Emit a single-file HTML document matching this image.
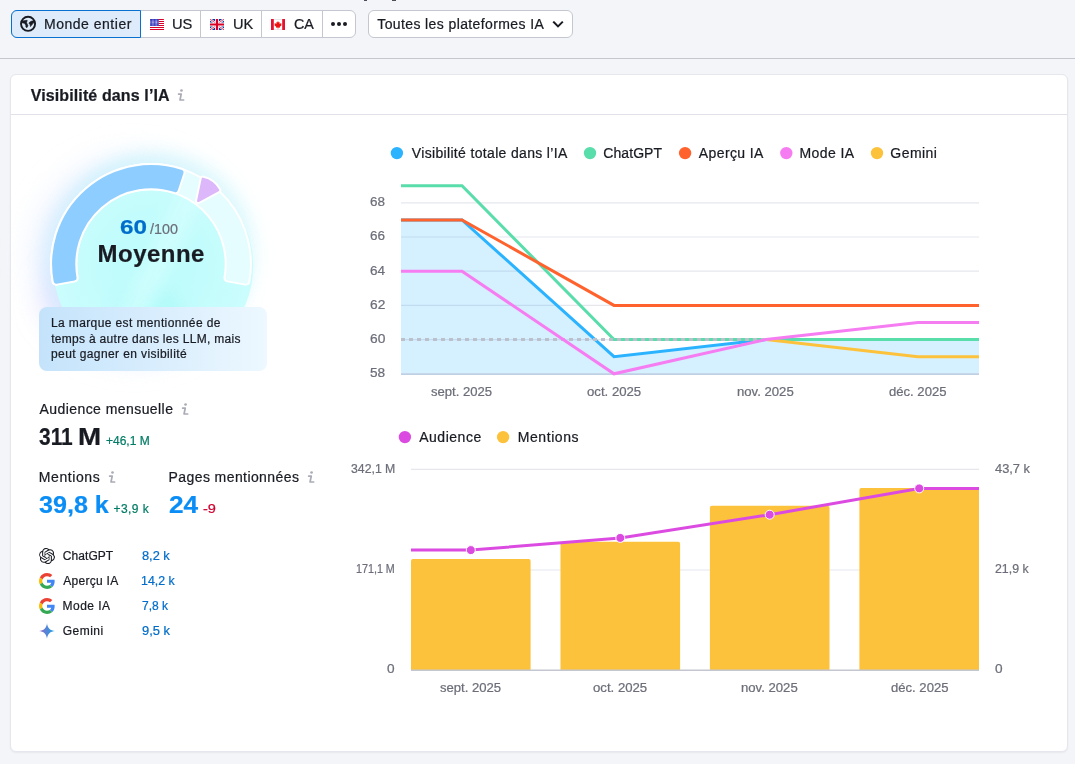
<!DOCTYPE html>
<html lang="fr">
<head>
<meta charset="utf-8">
<title>Visibilité dans l’IA</title>
<style>
*{box-sizing:border-box;margin:0;padding:0}
html,body{width:1075px;height:764px;overflow:hidden;background:#f4f5f9;font-family:"Liberation Sans",sans-serif;color:#191b23}
body{position:relative}
.t{position:absolute;white-space:nowrap;line-height:40px;transform-origin:0 0;-webkit-text-stroke:0.22px currentColor}
.abs{position:absolute}
.hr{position:absolute;left:0;top:58px;width:1075px;height:1px;background:#c4c7cf}
.card{position:absolute;left:10px;top:74px;width:1058px;height:678px;background:#fff;border:1px solid #e6e7ee;border-radius:6px;box-shadow:0 1px 2px rgba(25,27,35,.06)}
.cardhr{position:absolute;left:11px;top:114px;width:1056px;height:1px;background:#e0e1e9}
.btn{position:absolute;top:10px;height:28px;background:#fff;border:1px solid #c4c7cf}
.desc{position:absolute;left:39px;top:307px;width:228px;height:64px;border-radius:8px;background:linear-gradient(90deg,#c4e3fb 0%,#d8edfd 50%,#edf8ff 100%)}
svg{position:absolute;left:0;top:0;overflow:visible}
</style>
</head>
<body>
<div class="hr"></div>
<div class="abs" style="left:364px;top:0;width:3.4px;height:1px;background:#4b4d59"></div>
<div class="abs" style="left:392.2px;top:0;width:3.4px;height:1px;background:#4b4d59"></div>
<!-- top pills -->
<div class="btn" style="left:11px;width:345px;border-radius:6px"></div>
<div class="abs" style="left:200px;top:11px;width:1px;height:26px;background:#c4c7cf"></div>
<div class="abs" style="left:261px;top:11px;width:1px;height:26px;background:#c4c7cf"></div>
<div class="abs" style="left:322px;top:11px;width:1px;height:26px;background:#c4c7cf"></div>
<div class="btn" style="left:11px;width:130px;border-radius:6px 0 0 6px;background:#ddebfa;border-color:#0871d0"></div>
<div class="btn" style="left:368px;width:205px;border-radius:6px"></div>

<div class="card"></div>
<div class="cardhr"></div>

<!-- gauge -->
<svg id="gauge" width="1075" height="764" viewBox="0 0 1075 764">
<defs>
<filter id="blur1" x="-50%" y="-50%" width="200%" height="200%"><feGaussianBlur stdDeviation="17"/></filter>
<filter id="blur2" x="-50%" y="-50%" width="200%" height="200%"><feGaussianBlur stdDeviation="8"/></filter>
<filter id="blur3" x="-100%" y="-100%" width="300%" height="300%"><feGaussianBlur stdDeviation="14"/></filter>
<radialGradient id="cy" cx="0.5" cy="0.5" r="0.5"><stop offset="0" stop-color="#bbfcfb"/><stop offset="0.6" stop-color="#c4fcfc"/><stop offset="1" stop-color="#cbfdfd"/></radialGradient>
</defs>
<circle cx="134" cy="258" r="98" fill="#dce8ff" filter="url(#blur1)" opacity="0.62"/>
<circle cx="76" cy="300" r="34" fill="#e4dcff" filter="url(#blur3)" opacity="0.55"/>
<circle cx="142" cy="262" r="101" fill="#cfe7fe" filter="url(#blur2)" opacity="0.55"/>
<circle cx="155" cy="252" r="101" fill="#c9f7fb" filter="url(#blur2)" opacity="0.5"/>
<circle cx="153.2" cy="266" r="100" fill="url(#cy)"/>
<clipPath id="cclip"><circle cx="153.2" cy="266" r="100"/></clipPath>
<g clip-path="url(#cclip)"><ellipse cx="150" cy="318" rx="34" ry="30" fill="#aefaf9" filter="url(#blur2)" opacity="0.8"/><path d="M190 170L215 175L140 330L110 330Z" fill="#d6fefe" filter="url(#blur2)" opacity="0.7"/></g>
<path d="M56.14 281.17A96.40 96.40 0 1 1 245.86 281.17L227.95 277.93A78.20 78.20 0 1 0 74.05 277.93Z" fill="#fff" stroke="#fff" stroke-width="9.0" stroke-linejoin="round"/>
<path d="M56.14 281.17A96.40 96.40 0 1 1 245.86 281.17L227.95 277.93A78.20 78.20 0 1 0 74.05 277.93Z" fill="#e5fdfe" stroke="#e5fdfe" stroke-width="5.0" stroke-linejoin="round"/>
<path d="M56.14 281.17A96.40 96.40 0 0 1 181.04 172.40L175.37 189.69A78.20 78.20 0 0 0 74.05 277.93Z" fill="#fff" stroke="#fff" stroke-width="9.0" stroke-linejoin="round"/>
<path d="M56.14 281.17A96.40 96.40 0 0 1 181.04 172.40L175.37 189.69A78.20 78.20 0 0 0 74.05 277.93Z" fill="#8ecdff" stroke="#8ecdff" stroke-width="5.0" stroke-linejoin="round"/>
<path d="M198.26 200.82L202.86 178.80A22.50 22.50 0 0 1 218.09 190.19Z" fill="#fff" stroke="#fff" stroke-width="6.4" stroke-linejoin="round"/>
<path d="M198.26 200.82L202.86 178.80A22.50 22.50 0 0 1 218.09 190.19Z" fill="#dcb8fb" stroke="#dcb8fb" stroke-width="2.4" stroke-linejoin="round"/>
</svg>
<div class="desc"></div>

<!-- charts -->
<svg id="charts" width="1075" height="764" viewBox="0 0 1075 764">
<line x1="401" x2="979" y1="202.8" y2="202.8" stroke="#e6e7ed" stroke-width="1.2"/>
<line x1="401" x2="979" y1="237.0" y2="237.0" stroke="#e6e7ed" stroke-width="1.2"/>
<line x1="401" x2="979" y1="271.2" y2="271.2" stroke="#e6e7ed" stroke-width="1.2"/>
<line x1="401" x2="979" y1="305.4" y2="305.4" stroke="#e6e7ed" stroke-width="1.2"/>
<line x1="401" x2="979" y1="339.6" y2="339.6" stroke="#e6e7ed" stroke-width="1.2"/>
<polygon points="401.0,219.9 462.0,219.9 614.0,356.7 766.0,339.6 918.0,339.6 979.0,339.6 979.0,373.8 401.0,373.8" fill="#2bb3ff" fill-opacity="0.2"/>
<line x1="401" x2="979" y1="374.1" y2="374.1" stroke="#bfcfe4" stroke-width="1.6"/>
<polyline points="401.0,219.9 462.0,219.9 614.0,356.7 766.0,339.6 918.0,339.6 979.0,339.6" fill="none" stroke="#2bb3ff" stroke-width="3" stroke-linejoin="miter"/>
<polyline points="401.0,185.7 462.0,185.7 614.0,339.6 766.0,339.6 918.0,339.6 979.0,339.6" fill="none" stroke="#59ddaa" stroke-width="3" stroke-linejoin="miter"/>
<line x1="401" x2="766" y1="339.6" y2="339.6" stroke="#bcbfcc" stroke-width="3" stroke-dasharray="4 4"/>
<polyline points="401.0,219.9 462.0,219.9 614.0,305.4 766.0,305.4 918.0,305.4 979.0,305.4" fill="none" stroke="#ff622d" stroke-width="3" stroke-linejoin="miter"/>
<polyline points="766.0,339.6 918.0,356.7 979.0,356.7" fill="none" stroke="#fdc23c" stroke-width="3" stroke-linejoin="miter"/>
<polyline points="401.0,271.2 462.0,271.2 614.0,373.8 766.0,339.6 918.0,322.5 979.0,322.5" fill="none" stroke="#f67cf2" stroke-width="3" stroke-linejoin="miter"/>
<circle cx="396.9" cy="153.1" r="6.2" fill="#2bb3ff"/>
<circle cx="590" cy="153.1" r="6.2" fill="#59ddaa"/>
<circle cx="685.1" cy="153.1" r="6.2" fill="#ff622d"/>
<circle cx="786.3" cy="153.1" r="6.2" fill="#f67cf2"/>
<circle cx="877" cy="153.1" r="6.2" fill="#fdc23c"/>
<line x1="411" x2="979" y1="469.4" y2="469.4" stroke="#e6e7ed" stroke-width="1.2"/>
<line x1="411" x2="979" y1="570.0" y2="570.0" stroke="#e6e7ed" stroke-width="1.2"/>
<path d="M411.0 670.3V561.0a2 2 0 0 1 2 -2H528.6a2 2 0 0 1 2 2V670.3Z" fill="#fdc23c"/>
<path d="M560.5 670.3V543.7a2 2 0 0 1 2 -2H678.1a2 2 0 0 1 2 2V670.3Z" fill="#fdc23c"/>
<path d="M709.9 670.3V507.7a2 2 0 0 1 2 -2H827.5a2 2 0 0 1 2 2V670.3Z" fill="#fdc23c"/>
<path d="M859.4 670.3V490.1a2 2 0 0 1 2 -2H977.0a2 2 0 0 1 2 2V670.3Z" fill="#fdc23c"/>
<line x1="411" x2="979" y1="670.3" y2="670.3" stroke="#c4c7cf" stroke-width="1.6"/>
<path d="M411.0 550.1L470.8 550.1L620.3 537.9L769.7 514.7L919.2 488.4L979.0 488.4" fill="none" stroke="#dc4be1" stroke-width="3" stroke-linejoin="round"/>
<circle cx="470.8" cy="550.1" r="4.5" fill="#dc4be1" stroke="#fff" stroke-width="1"/>
<circle cx="620.3" cy="537.9" r="4.5" fill="#dc4be1" stroke="#fff" stroke-width="1"/>
<circle cx="769.7" cy="514.7" r="4.5" fill="#dc4be1" stroke="#fff" stroke-width="1"/>
<circle cx="919.2" cy="488.4" r="4.5" fill="#dc4be1" stroke="#fff" stroke-width="1"/>
<circle cx="404.9" cy="437.1" r="6.2" fill="#dc4be1"/>
<circle cx="503.1" cy="437.1" r="6.2" fill="#fdc23c"/>
</svg>

<!-- icons -->
<svg id="icons" width="1075" height="764" viewBox="0 0 1075 764">
<defs><linearGradient id="gem" x1="0" y1="0.5" x2="1" y2="0.5"><stop offset="0" stop-color="#9b62c4"/><stop offset="0.45" stop-color="#5684d6"/><stop offset="1" stop-color="#1aa4e5"/></linearGradient><clipPath id="fl1"><rect x="150" y="19" width="14" height="11" rx="0.5"/></clipPath><clipPath id="fl2"><rect x="210" y="19" width="14" height="11" rx="0.5"/></clipPath></defs>
<circle cx="181.50" cy="90.50" r="1.35" fill="#a9abb6"/><path d="M178.60 94.10H181.20L180.00 100.00H183.60" fill="none" stroke="#a9abb6" stroke-width="1.7" stroke-linecap="round" stroke-linejoin="round"/>
<circle cx="185.55" cy="404.50" r="1.35" fill="#a9abb6"/><path d="M182.65 408.10H185.25L184.05 414.00H187.65" fill="none" stroke="#a9abb6" stroke-width="1.7" stroke-linecap="round" stroke-linejoin="round"/>
<circle cx="112.50" cy="472.50" r="1.35" fill="#a9abb6"/><path d="M109.60 476.10H112.20L111.00 482.00H114.60" fill="none" stroke="#a9abb6" stroke-width="1.7" stroke-linecap="round" stroke-linejoin="round"/>
<circle cx="311.55" cy="472.50" r="1.35" fill="#a9abb6"/><path d="M308.65 476.10H311.25L310.05 482.00H313.65" fill="none" stroke="#a9abb6" stroke-width="1.7" stroke-linecap="round" stroke-linejoin="round"/>
<circle cx="333" cy="24" r="2" fill="#191b23"/>
<circle cx="339" cy="24" r="2" fill="#191b23"/>
<circle cx="345" cy="24" r="2" fill="#191b23"/>
<path d="M553.9 22.3L558 26.4L562.1 22.3" fill="none" stroke="#191b23" stroke-width="2" stroke-linecap="square" stroke-linejoin="miter"/>
<circle cx="28.05" cy="23.85" r="7.05" fill="none" stroke="#191b23" stroke-width="1.9"/>
<path d="M21.2 21.1L27.2 20.3L26.6 22.7L28 25.8L26.9 27.7L25.9 27.1L25.8 25.2L24.4 23.3L21.5 22.7Z" fill="#191b23" stroke="#191b23" stroke-width="0.6" stroke-linejoin="round"/>
<path d="M29.1 22.7L31 21.3L34.4 20.5L34.6 22.1L32.4 24.1L30.5 26.6L30 24.6L29.1 23.5Z" fill="#191b23" stroke="#191b23" stroke-width="0.6" stroke-linejoin="round"/>
<g clip-path="url(#fl1)"><rect x="150" y="19" width="14" height="11" fill="#fff"/><rect x="150" y="19" width="14" height="1" fill="#d80027"/><rect x="150" y="21" width="14" height="1" fill="#d80027"/><rect x="150" y="23" width="14" height="1" fill="#d80027"/><rect x="150" y="25" width="14" height="1" fill="#d80027"/><rect x="150" y="27" width="14" height="1" fill="#d80027"/><rect x="150" y="29" width="14" height="1" fill="#d80027"/><rect x="150" y="19" width="8.8" height="7" fill="#1c1fb4"/><circle cx="150.90" cy="19.90" r="0.5" fill="#fff" fill-opacity="0.85"/><circle cx="152.32" cy="19.90" r="0.5" fill="#fff" fill-opacity="0.85"/><circle cx="153.74" cy="19.90" r="0.5" fill="#fff" fill-opacity="0.85"/><circle cx="155.16" cy="19.90" r="0.5" fill="#fff" fill-opacity="0.85"/><circle cx="156.58" cy="19.90" r="0.5" fill="#fff" fill-opacity="0.85"/><circle cx="158.00" cy="19.90" r="0.5" fill="#fff" fill-opacity="0.85"/><circle cx="150.90" cy="21.20" r="0.5" fill="#fff" fill-opacity="0.85"/><circle cx="152.32" cy="21.20" r="0.5" fill="#fff" fill-opacity="0.85"/><circle cx="153.74" cy="21.20" r="0.5" fill="#fff" fill-opacity="0.85"/><circle cx="155.16" cy="21.20" r="0.5" fill="#fff" fill-opacity="0.85"/><circle cx="156.58" cy="21.20" r="0.5" fill="#fff" fill-opacity="0.85"/><circle cx="158.00" cy="21.20" r="0.5" fill="#fff" fill-opacity="0.85"/><circle cx="150.90" cy="22.50" r="0.5" fill="#fff" fill-opacity="0.85"/><circle cx="152.32" cy="22.50" r="0.5" fill="#fff" fill-opacity="0.85"/><circle cx="153.74" cy="22.50" r="0.5" fill="#fff" fill-opacity="0.85"/><circle cx="155.16" cy="22.50" r="0.5" fill="#fff" fill-opacity="0.85"/><circle cx="156.58" cy="22.50" r="0.5" fill="#fff" fill-opacity="0.85"/><circle cx="158.00" cy="22.50" r="0.5" fill="#fff" fill-opacity="0.85"/><circle cx="150.90" cy="23.80" r="0.5" fill="#fff" fill-opacity="0.85"/><circle cx="152.32" cy="23.80" r="0.5" fill="#fff" fill-opacity="0.85"/><circle cx="153.74" cy="23.80" r="0.5" fill="#fff" fill-opacity="0.85"/><circle cx="155.16" cy="23.80" r="0.5" fill="#fff" fill-opacity="0.85"/><circle cx="156.58" cy="23.80" r="0.5" fill="#fff" fill-opacity="0.85"/><circle cx="158.00" cy="23.80" r="0.5" fill="#fff" fill-opacity="0.85"/><circle cx="150.90" cy="25.10" r="0.5" fill="#fff" fill-opacity="0.85"/><circle cx="152.32" cy="25.10" r="0.5" fill="#fff" fill-opacity="0.85"/><circle cx="153.74" cy="25.10" r="0.5" fill="#fff" fill-opacity="0.85"/><circle cx="155.16" cy="25.10" r="0.5" fill="#fff" fill-opacity="0.85"/><circle cx="156.58" cy="25.10" r="0.5" fill="#fff" fill-opacity="0.85"/><circle cx="158.00" cy="25.10" r="0.5" fill="#fff" fill-opacity="0.85"/></g>
<g clip-path="url(#fl2)"><rect x="210" y="19" width="14" height="11" fill="#0a3a9b"/><path d="M210 19L224 30M224 19L210 30" stroke="#fff" stroke-width="2.2"/><path d="M210 19L224 30M224 19L210 30" stroke="#d80027" stroke-width="0.8"/><path d="M217 19V30M210 24.5H224" stroke="#fff" stroke-width="3.8"/><path d="M217 19V30M210 24.5H224" stroke="#d80027" stroke-width="2.2"/></g>
<rect x="271" y="19" width="14" height="11" fill="#fff"/><rect x="273.8" y="19" width="8.4" height="0.6" fill="#d9dbe0"/><rect x="273.8" y="29.4" width="8.4" height="0.6" fill="#d9dbe0"/><rect x="271" y="19" width="2.8" height="11" fill="#e4112f"/><rect x="282.2" y="19" width="2.8" height="11" fill="#e4112f"/><path d="M278 21l.8 1.4.9-.4-.3 2 1-.9.2.6 1.1-.2-.5 1.5.4.3-2 1.7.2.9-1.6-.3v1.7h-.4v-1.7l-1.6.3.2-.9-2-1.700.4-.3-.5-1.500 1.100.2.200-.6 1 .9-.3-2 .9.4z" fill="#ee1111"/>
<g transform="translate(39 548) scale(0.66667)"><path d="M22.2819 9.8211a5.9847 5.9847 0 0 0-.5157-4.9108 6.0462 6.0462 0 0 0-6.5098-2.9A6.0651 6.0651 0 0 0 4.9807 4.1818a5.9847 5.9847 0 0 0-3.9977 2.9 6.0462 6.0462 0 0 0 .7427 7.0966 5.98 5.98 0 0 0 .511 4.9107 6.051 6.051 0 0 0 6.5146 2.9001A5.9847 5.9847 0 0 0 13.2599 24a6.0557 6.0557 0 0 0 5.7718-4.2058 5.9894 5.9894 0 0 0 3.9977-2.9001 6.0557 6.0557 0 0 0-.7475-7.0729zm-9.022 12.6081a4.4755 4.4755 0 0 1-2.8764-1.0408l.1419-.0804 4.7783-2.7582a.7948.7948 0 0 0 .3927-.6813v-6.7369l2.02 1.1686a.071.071 0 0 1 .038.052v5.5826a4.504 4.504 0 0 1-4.4945 4.4944zm-9.6607-4.1254a4.4708 4.4708 0 0 1-.5346-3.0137l.142.0852 4.783 2.7582a.7712.7712 0 0 0 .7806 0l5.8428-3.3685v2.3324a.0804.0804 0 0 1-.0332.0615L9.74 19.9502a4.4992 4.4992 0 0 1-6.1408-1.6464zM2.3408 7.8956a4.485 4.485 0 0 1 2.3655-1.9728V11.6a.7664.7664 0 0 0 .3879.6765l5.8144 3.3543-2.0201 1.1685a.0757.0757 0 0 1-.071 0l-4.8303-2.7865A4.504 4.504 0 0 1 2.3408 7.872zm16.5963 3.8558L13.1038 8.364 15.1192 7.2a.0757.0757 0 0 1 .071 0l4.8303 2.7913a4.4944 4.4944 0 0 1-.6765 8.1042v-5.6772a.79.79 0 0 0-.407-.667zm2.0107-3.0231l-.142-.0852-4.7735-2.7818a.7759.7759 0 0 0-.7854 0L9.409 9.2297V6.8974a.0662.0662 0 0 1 .0284-.0615l4.8303-2.7866a4.4992 4.4992 0 0 1 6.6802 4.66zM8.3065 12.863l-2.02-1.1638a.0804.0804 0 0 1-.038-.0567V6.0742a4.4992 4.4992 0 0 1 7.3757-3.4537l-.142.0805L8.704 5.459a.7948.7948 0 0 0-.3927.6813zm1.0976-2.3654l2.602-1.4998 2.6069 1.4998v2.9994l-2.5974 1.4997-2.6067-1.4997Z" fill="#191b23"/></g>
<g transform="translate(39.00 573.00) scale(0.33333)"><path fill="#EA4335" d="M24 9.5c3.54 0 6.71 1.22 9.21 3.6l6.85-6.85C35.9 2.38 30.47 0 24 0 14.62 0 6.51 5.38 2.56 13.22l7.98 6.19C12.43 13.72 17.74 9.5 24 9.5z"/><path fill="#4285F4" d="M46.98 24.55c0-1.57-.15-3.09-.38-4.55H24v9.02h12.94c-.58 2.96-2.26 5.48-4.78 7.18l7.73 6c4.51-4.18 7.09-10.36 7.09-17.65z"/><path fill="#FBBC05" d="M10.53 28.59c-.48-1.45-.76-2.99-.76-4.59s.27-3.14.76-4.59l-7.98-6.19C.92 16.46 0 20.12 0 24c0 3.88.92 7.54 2.56 10.78l7.97-6.19z"/><path fill="#34A853" d="M24 48c6.48 0 11.93-2.13 15.89-5.81l-7.73-6c-2.15 1.45-4.92 2.3-8.16 2.3-6.26 0-11.57-4.22-13.47-9.91l-7.98 6.19C6.51 42.62 14.62 48 24 48z"/></g>
<g transform="translate(39.00 598.00) scale(0.33333)"><path fill="#EA4335" d="M24 9.5c3.54 0 6.71 1.22 9.21 3.6l6.85-6.85C35.9 2.38 30.47 0 24 0 14.62 0 6.51 5.38 2.56 13.22l7.98 6.19C12.43 13.72 17.74 9.5 24 9.5z"/><path fill="#4285F4" d="M46.98 24.55c0-1.57-.15-3.09-.38-4.55H24v9.02h12.94c-.58 2.96-2.26 5.48-4.78 7.18l7.73 6c4.51-4.18 7.09-10.36 7.09-17.65z"/><path fill="#FBBC05" d="M10.53 28.59c-.48-1.45-.76-2.99-.76-4.59s.27-3.14.76-4.59l-7.98-6.19C.92 16.46 0 20.12 0 24c0 3.88.92 7.54 2.56 10.78l7.97-6.19z"/><path fill="#34A853" d="M24 48c6.48 0 11.93-2.13 15.89-5.81l-7.73-6c-2.15 1.45-4.92 2.3-8.16 2.3-6.26 0-11.57-4.22-13.47-9.91l-7.98 6.19C6.51 42.62 14.62 48 24 48z"/></g>
<path transform="translate(39 623)" d="M8 0C8 4.4 11.6 8 16 8C11.6 8 8 11.6 8 16C8 11.600 4.400 8 0 8C4.400 8 8 4.400 8 0Z" fill="url(#gem)"/>
</svg>

<div id="txt" style="position:absolute;left:0;top:0;width:1075px;height:764px;will-change:transform">
<span class="t" style="left:43.96px;top:4px;font-size:14px;color:#191b23;letter-spacing:0.518px;">Monde entier</span>
<span class="t" style="left:172.37px;top:4px;font-size:14px;color:#191b23;transform:scaleX(1.0466);">US</span>
<span class="t" style="left:232.97px;top:4px;font-size:14px;color:#191b23;transform:scaleX(1.0386);">UK</span>
<span class="t" style="left:293.54px;top:4px;font-size:14px;color:#191b23;transform:scaleX(1.0211);">CA</span>
<span class="t" style="left:377.24px;top:4px;font-size:14px;color:#191b23;letter-spacing:0.392px;">Toutes les plateformes IA</span>
<span class="t" style="left:30.65px;top:76px;font-size:16px;color:#191b23;font-weight:700;letter-spacing:0.122px;">Visibilité dans l’IA</span>
<span class="t" style="left:119.55px;top:207px;font-size:20px;color:#006dca;font-weight:700;transform:scaleX(1.2129);">60</span>
<span class="t" style="left:150.33px;top:209px;font-size:14px;color:#6c6e79;transform:scaleX(1.0250);">/100</span>
<span class="t" style="left:97.57px;top:234px;font-size:24px;color:#191b23;font-weight:700;letter-spacing:0.462px;">Moyenne</span>
<span class="t" style="left:50.91px;top:303px;font-size:12px;color:#191b23;letter-spacing:0.388px;">La marque est mentionnée de</span>
<span class="t" style="left:51.20px;top:319px;font-size:12px;color:#191b23;letter-spacing:0.296px;">temps à autre dans les LLM, mais</span>
<span class="t" style="left:51.03px;top:334px;font-size:12px;color:#191b23;letter-spacing:0.396px;">peut gagner en visibilité</span>
<span class="t" style="left:39.48px;top:389px;font-size:14px;color:#191b23;letter-spacing:0.435px;">Audience mensuelle</span>
<span class="t" style="left:39.13px;top:417px;font-size:24px;color:#191b23;font-weight:700;transform:scaleX(0.8714);">311 </span>
<span class="t" style="left:78.17px;top:417px;font-size:24px;color:#191b23;font-weight:700;transform:scaleX(1.1565);">M</span>
<span class="t" style="left:105.67px;top:421px;font-size:12px;color:#007c65;transform:scaleX(1.0005);">+46,1 M</span>
<span class="t" style="left:38.86px;top:457px;font-size:14px;color:#191b23;letter-spacing:0.578px;">Mentions</span>
<span class="t" style="left:168.56px;top:457px;font-size:14px;color:#191b23;letter-spacing:0.412px;">Pages mentionnées</span>
<span class="t" style="left:39.06px;top:485px;font-size:24px;color:#0a8df5;font-weight:700;transform:scaleX(1.0463);">39,8 k</span>
<span class="t" style="left:113.57px;top:489px;font-size:12px;color:#007c65;letter-spacing:0.432px;">+3,9 k</span>
<span class="t" style="left:168.77px;top:485px;font-size:24px;color:#0a8df5;font-weight:700;transform:scaleX(1.0921);">24</span>
<span class="t" style="left:202.91px;top:489px;font-size:12px;color:#d1002f;transform:scaleX(1.2105);">-9</span>
<span class="t" style="left:62.84px;top:536px;font-size:12px;color:#191b23;letter-spacing:0.050px;">ChatGPT</span>
<span class="t" style="left:141.57px;top:536px;font-size:12px;color:#006dca;transform:scaleX(1.0670);">8,2 k</span>
<span class="t" style="left:63.18px;top:561px;font-size:12px;color:#191b23;letter-spacing:0.292px;">Aperçu IA</span>
<span class="t" style="left:141.35px;top:561px;font-size:12px;color:#006dca;transform:scaleX(1.0310);">14,2 k</span>
<span class="t" style="left:62.61px;top:586px;font-size:12px;color:#191b23;letter-spacing:0.465px;">Mode IA</span>
<span class="t" style="left:141.57px;top:586px;font-size:12px;color:#006dca;transform:scaleX(1.0010);">7,8 k</span>
<span class="t" style="left:62.84px;top:611px;font-size:12px;color:#191b23;letter-spacing:0.451px;">Gemini</span>
<span class="t" style="left:141.51px;top:611px;font-size:12px;color:#006dca;transform:scaleX(1.0758);">9,5 k</span>
<span class="t" style="left:411.78px;top:133px;font-size:14px;color:#191b23;letter-spacing:0.335px;">Visibilité totale dans l’IA</span>
<span class="t" style="left:603.35px;top:133px;font-size:14px;color:#191b23;letter-spacing:0.055px;">ChatGPT</span>
<span class="t" style="left:698.78px;top:133px;font-size:14px;color:#191b23;letter-spacing:0.402px;">Aperçu IA</span>
<span class="t" style="left:799.46px;top:133px;font-size:14px;color:#191b23;letter-spacing:0.432px;">Mode IA</span>
<span class="t" style="left:890.37px;top:133px;font-size:14px;color:#191b23;letter-spacing:0.423px;">Gemini</span>
<span class="t" style="left:369.89px;top:182px;font-size:12px;color:#6c6e79;transform:scaleX(1.1177);">68</span>
<span class="t" style="left:369.89px;top:216px;font-size:12px;color:#6c6e79;transform:scaleX(1.1213);">66</span>
<span class="t" style="left:369.89px;top:251px;font-size:12px;color:#6c6e79;transform:scaleX(1.1260);">64</span>
<span class="t" style="left:369.89px;top:285px;font-size:12px;color:#6c6e79;transform:scaleX(1.1426);">62</span>
<span class="t" style="left:369.88px;top:319px;font-size:12px;color:#6c6e79;transform:scaleX(1.1478);">60</span>
<span class="t" style="left:369.81px;top:353px;font-size:12px;color:#6c6e79;transform:scaleX(1.1319);">58</span>
<span class="t" style="left:431.42px;top:372px;font-size:12px;color:#6c6e79;transform:scaleX(1.0903);">sept. 2025</span>
<span class="t" style="left:586.59px;top:372px;font-size:12px;color:#6c6e79;transform:scaleX(1.0973);">oct. 2025</span>
<span class="t" style="left:737.47px;top:372px;font-size:12px;color:#6c6e79;transform:scaleX(1.0944);">nov. 2025</span>
<span class="t" style="left:889.34px;top:372px;font-size:12px;color:#6c6e79;transform:scaleX(1.0903);">déc. 2025</span>
<span class="t" style="left:419.18px;top:417px;font-size:14px;color:#191b23;letter-spacing:0.523px;">Audience</span>
<span class="t" style="left:517.66px;top:417px;font-size:14px;color:#191b23;letter-spacing:0.591px;">Mentions</span>
<span class="t" style="left:351.09px;top:449px;font-size:12px;color:#6c6e79;transform:scaleX(1.0228);">342,1 M</span>
<span class="t" style="left:356.41px;top:549px;font-size:12px;color:#6c6e79;transform:scaleX(0.8952);">171,1 M</span>
<span class="t" style="left:387.32px;top:649px;font-size:12px;color:#6c6e79;transform:scaleX(1.1343);">0</span>
<span class="t" style="left:995.14px;top:449px;font-size:12px;color:#6c6e79;transform:scaleX(1.0693);">43,7 k</span>
<span class="t" style="left:994.84px;top:549px;font-size:12px;color:#6c6e79;transform:scaleX(1.0285);">21,9 k</span>
<span class="t" style="left:994.92px;top:649px;font-size:12px;color:#6c6e79;transform:scaleX(1.1343);">0</span>
<span class="t" style="left:440.32px;top:668px;font-size:12px;color:#6c6e79;transform:scaleX(1.0903);">sept. 2025</span>
<span class="t" style="left:593.09px;top:668px;font-size:12px;color:#6c6e79;transform:scaleX(1.0973);">oct. 2025</span>
<span class="t" style="left:741.27px;top:668px;font-size:12px;color:#6c6e79;transform:scaleX(1.0944);">nov. 2025</span>
<span class="t" style="left:890.54px;top:668px;font-size:12px;color:#6c6e79;transform:scaleX(1.0903);">déc. 2025</span>
</div>
</body>
</html>
